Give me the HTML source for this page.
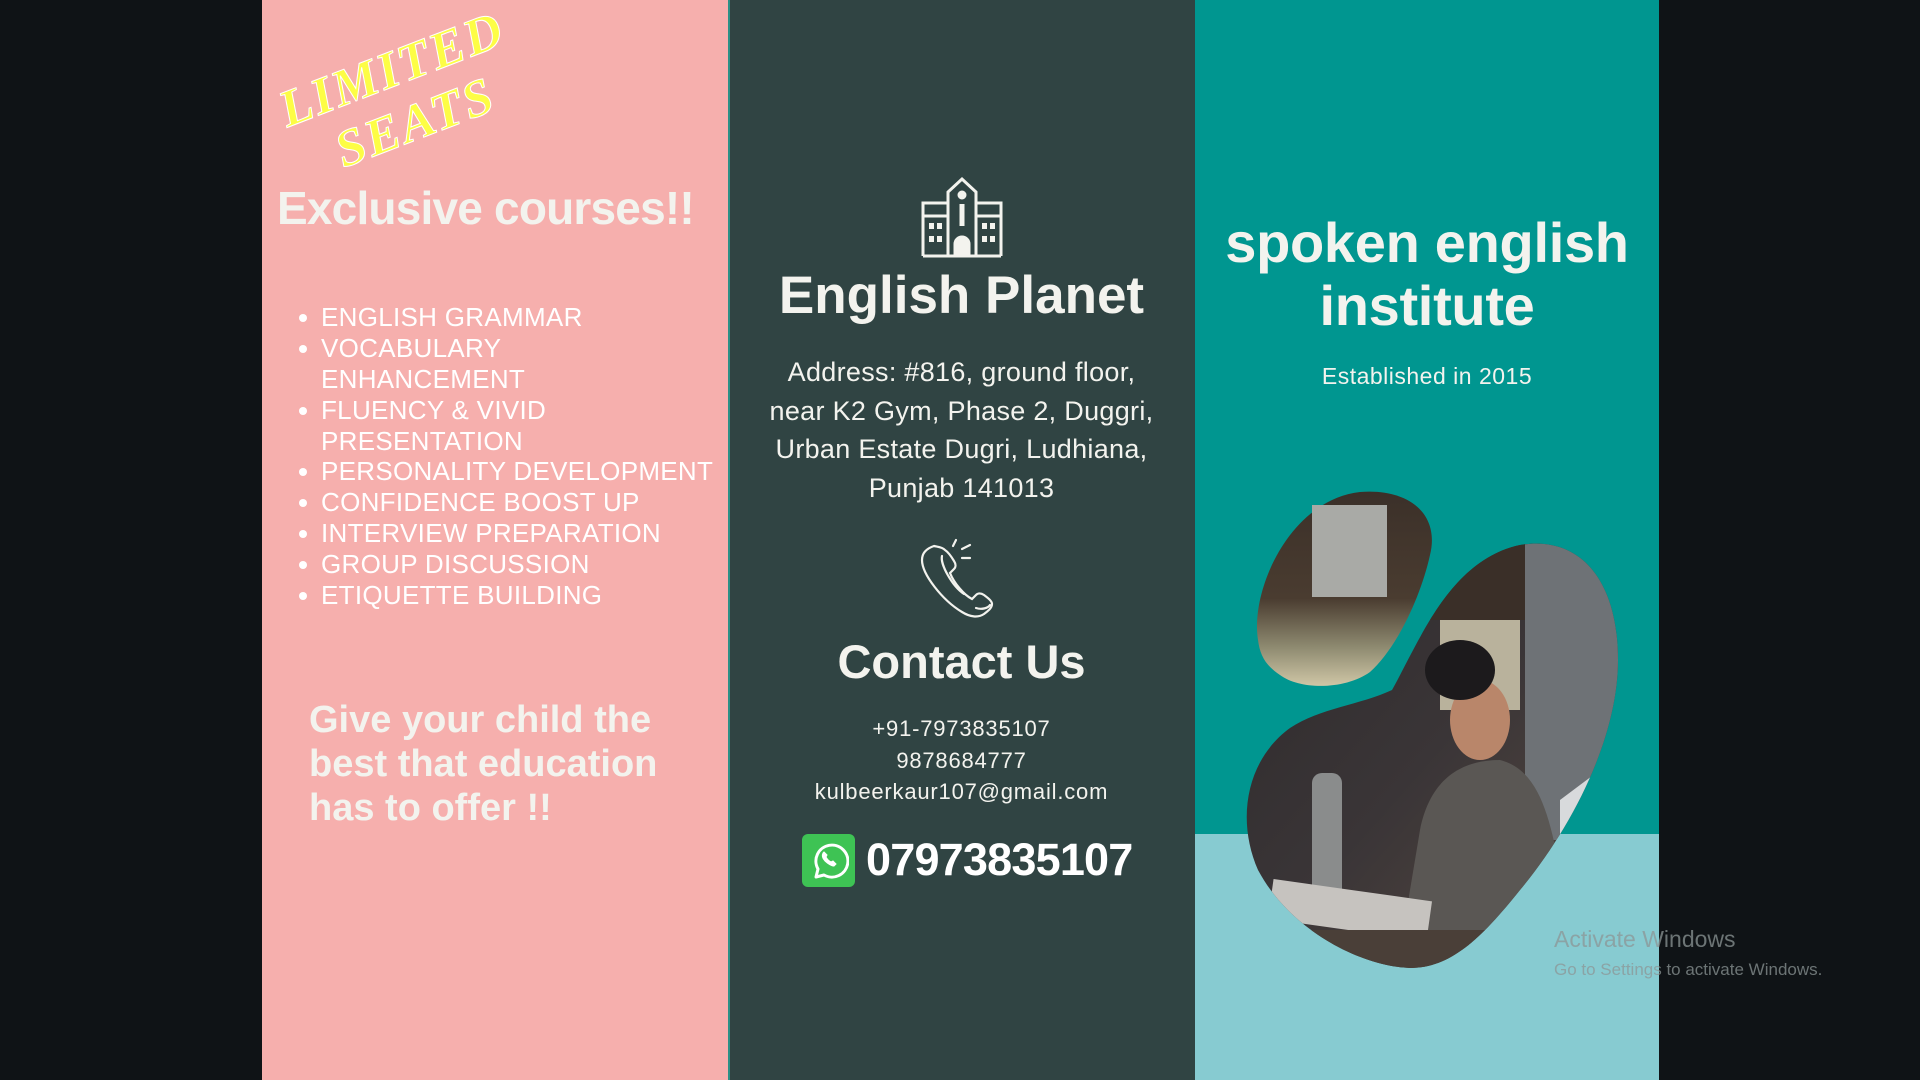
<!DOCTYPE html>
<html><head><meta charset="utf-8">
<style>
*{margin:0;padding:0;box-sizing:border-box}
body{width:1920px;height:1080px;background:#0f1316;position:relative;overflow:hidden;font-family:"Liberation Sans",sans-serif;color:#f3f3ee}
.abs{position:absolute}
.pink{left:262px;top:0;width:466px;height:1080px;background:#f6afad}
.dark{left:728px;top:0;width:467px;height:1080px;background:#304443;border-left:2px solid #2d8f86}
.teal{left:1195px;top:0;width:464px;height:834px;background:#009690}
.lteal{left:1195px;top:834px;width:464px;height:246px;background:#87cbd1}
.c{text-align:center;white-space:nowrap}
.list div{position:absolute;left:321px;font-size:26px;line-height:31px;white-space:nowrap;color:#fff;letter-spacing:0.3px}
.list div.b::before{content:"";position:absolute;left:-22px;top:12px;width:8px;height:8px;border-radius:50%;background:#fff}
</style></head><body>
<div class="abs pink"></div>
<div class="abs dark"></div>
<div class="abs teal"></div>
<div class="abs lteal"></div>

<!-- LIMITED SEATS -->
<div class="abs" style="left:246px;top:48px;width:260px;transform:rotate(-21deg);transform-origin:left top;font-family:'Liberation Serif',serif;font-weight:bold;font-style:italic;color:#fdfd45;-webkit-text-stroke:1px #fff;line-height:46px;letter-spacing:2px">
<div style="font-size:52px;position:relative;top:50px;left:10px">LIMITED</div>
<div style="font-size:52px;position:relative;top:62px;left:48px">SEATS</div>
</div>

<div class="abs" style="left:277px;top:181px;font-size:46px;font-weight:bold;white-space:nowrap;letter-spacing:-0.8px">Exclusive courses!!</div>

<div class="list">
<div class="b" style="top:302px">ENGLISH GRAMMAR</div>
<div class="b" style="top:333px">VOCABULARY</div>
<div style="top:364px">ENHANCEMENT</div>
<div class="b" style="top:395px">FLUENCY &amp; VIVID</div>
<div style="top:426px">PRESENTATION</div>
<div class="b" style="top:456px">PERSONALITY DEVELOPMENT</div>
<div class="b" style="top:487px">CONFIDENCE BOOST UP</div>
<div class="b" style="top:518px">INTERVIEW PREPARATION</div>
<div class="b" style="top:549px">GROUP DISCUSSION</div>
<div class="b" style="top:580px">ETIQUETTE BUILDING</div>
</div>

<div class="abs" style="left:309px;top:698px;font-size:38px;font-weight:bold;line-height:44px;white-space:nowrap;letter-spacing:0px">Give your child the<br>best that education<br>has to offer !!</div>

<!-- building icon -->
<svg class="abs" style="left:921px;top:176px" width="82" height="82" viewBox="0 0 82 82" fill="none" stroke="#f3f3ee" stroke-width="3">
<path d="M2 80V27H27M80 80V27H55M2 40H27M55 40H80M2 80H80"/>
<path d="M27 80V16L41 3L55 16V80"/>
<circle cx="41" cy="19" r="3" fill="#f3f3ee"/>
<path d="M41 28V50" stroke-width="5"/>
<path d="M34 80V68a7 7 0 0 1 14 0V80" fill="#f3f3ee"/>
<g fill="#f3f3ee" stroke="none"><rect x="8" y="47" width="5" height="6"/><rect x="16" y="47" width="5" height="6"/><rect x="8" y="60" width="5" height="6"/><rect x="16" y="60" width="5" height="6"/><rect x="61" y="47" width="5" height="6"/><rect x="69" y="47" width="5" height="6"/><rect x="61" y="60" width="5" height="6"/><rect x="69" y="60" width="5" height="6"/></g>
</svg>

<div class="abs c" style="left:728px;width:467px;top:266px;font-size:53px;font-weight:bold;line-height:60px">English Planet</div>
<div class="abs c" style="left:728px;width:467px;top:353px;font-size:27px;line-height:38.5px;letter-spacing:0.3px">Address: #816, ground floor,<br>near K2 Gym, Phase 2, Duggri,<br>Urban Estate Dugri, Ludhiana,<br>Punjab 141013</div>

<!-- phone icon -->
<svg class="abs" style="left:918px;top:538px" width="84" height="82" viewBox="0 0 84 82" fill="none" stroke="#f3f3ee" stroke-width="2.2" stroke-linecap="round">
<path d="M16 8c-6 2-12 6-12 14c0 14 20 40 40 52c8 5 16 6 22 2c4-3 8-6 8-10c0-3-4-6-8-9c-3-2-6-2-8 0l-4 4c-8-4-18-16-22-26l4-4c2-2 2-5 0-8c-3-5-6-9-9-11c-3-3-7-3-11-4z"/>
<path d="M24 18c-2 8 10 30 22 38M58 70c6 2 12 0 14-3"/>
<path d="M38 2l-3 6M52 7l-8 4M52 20l-8 0"/>
</svg>

<div class="abs c" style="left:728px;width:467px;top:634px;font-size:47px;font-weight:bold;line-height:56px">Contact Us</div>
<div class="abs c" style="left:728px;width:467px;top:713px;font-size:22px;line-height:31.5px;letter-spacing:0.8px">+91-7973835107<br>9878684777<br>kulbeerkaur107@gmail.com</div>

<!-- whatsapp -->
<div class="abs" style="left:802px;top:834px;width:53px;height:53px;border-radius:6px;background:#3ec354"></div>
<svg class="abs" style="left:808px;top:840px" width="41" height="41" viewBox="0 0 41 41" fill="none" stroke="#fff" stroke-width="3">
<path d="M8 37l2-8a16 16 0 1 1 6 6z" stroke-linejoin="round"/>
<path d="M15 13c-1 2-1 5 2 8s7 5 9 5l2-2-3-3-2 1c-2-1-4-3-5-5l1-2-3-3z" fill="#fff" stroke-width="1"/>
</svg>
<div class="abs" style="left:866px;top:832px;font-size:45px;font-weight:bold;line-height:56px;color:#fff;letter-spacing:-0.8px">07973835107</div>

<div class="abs c" style="left:1195px;width:464px;top:211px;font-size:56px;font-weight:bold;line-height:63px;letter-spacing:-0.3px">spoken english<br>institute</div>
<div class="abs c" style="left:1195px;width:464px;top:362px;font-size:23px;line-height:28px;letter-spacing:0.5px">Established in 2015</div>

<!-- photo blobs -->
<svg class="abs" style="left:0;top:0" width="1920" height="1080">
<defs>
<linearGradient id="g1" x1="0" y1="0" x2="0" y2="1"><stop offset="0" stop-color="#3b3029"/><stop offset="0.55" stop-color="#4a3c30"/><stop offset="0.8" stop-color="#8e8a70"/><stop offset="1" stop-color="#cfc6a6"/></linearGradient>
<linearGradient id="g2" x1="0" y1="0" x2="1" y2="1"><stop offset="0" stop-color="#2e2a2b"/><stop offset="0.5" stop-color="#3a3537"/><stop offset="1" stop-color="#5a4c42"/></linearGradient>
<clipPath id="cb"><path d="M1392 690C1420 640 1450 560 1520 545C1580 535 1618 580 1618 660C1618 740 1570 830 1520 890C1480 940 1450 968 1410 968C1360 966 1290 930 1258 870C1236 820 1246 760 1290 728C1320 708 1360 705 1392 690Z"/></clipPath>
</defs>
<path d="M1258 640C1250 590 1290 500 1360 492C1410 488 1440 515 1430 555C1420 600 1395 650 1370 672C1345 690 1300 690 1280 675C1265 665 1260 655 1258 640Z" fill="url(#g1)"/>
<rect x="1312" y="505" width="75" height="92" fill="#a9aaa6"/>
<g clip-path="url(#cb)">
<rect x="1240" y="540" width="380" height="430" fill="url(#g2)"/>
<rect x="1420" y="540" width="120" height="80" fill="#3a2f28"/>
<rect x="1440" y="620" width="80" height="90" fill="#b9b29c"/>
<rect x="1525" y="540" width="100" height="300" fill="#6e7276"/>
<path d="M1400 950L1420 830C1430 780 1460 760 1500 760C1540 770 1550 820 1560 870L1580 950Z" fill="#5a5754"/>
<ellipse cx="1480" cy="720" rx="30" ry="40" fill="#b9866a"/>
<ellipse cx="1460" cy="670" rx="35" ry="30" fill="#1c1a1c"/>
<path d="M1560 800L1600 770L1600 860L1560 900Z" fill="#d8dadc"/>
<rect x="1312" y="773" width="30" height="150" rx="10" fill="#8a8c8c"/>
<rect x="1270" y="890" width="160" height="40" fill="#c6c3bf" transform="rotate(8 1350 910)"/>
<rect x="1240" y="930" width="380" height="40" fill="#4a3f38"/>
</g>
</svg>

<div class="abs" style="left:1554px;top:926px;font-size:23px;color:rgba(140,150,150,0.75);white-space:nowrap">Activate Windows</div>
<div class="abs" style="left:1554px;top:960px;font-size:17px;color:rgba(140,150,150,0.75);white-space:nowrap">Go to Settings to activate Windows.</div>
</body></html>
